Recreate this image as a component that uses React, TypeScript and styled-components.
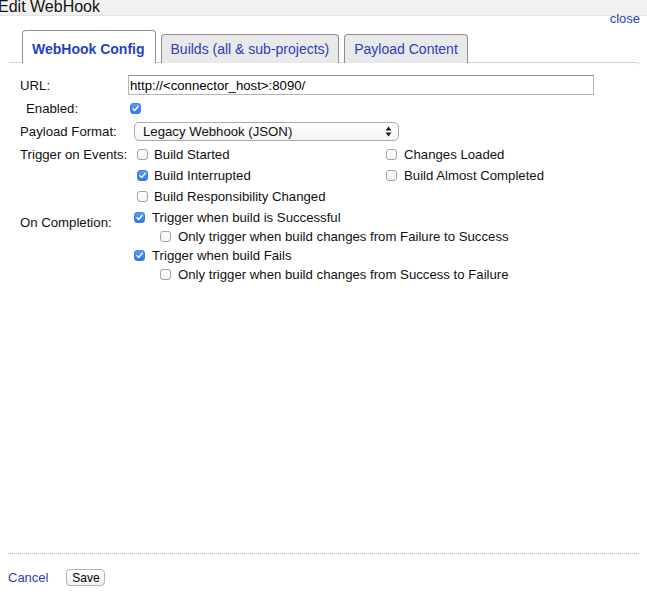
import React from "react";
import styled, {createGlobalStyle} from "styled-components";

const GlobalStyle = createGlobalStyle`
  html, body {
    margin: 0;
    padding: 0;
    background: #ffffff;
  }
  body {
    font-family: "Liberation Sans", Arial, Helvetica, sans-serif;
    font-size: 13.2px;
    color: #111;
  }
`;

const Dialog = styled.div`
  position: relative;
  width: 647px;
  height: 611px;
  display: flex;
  flex-direction: column;
  overflow: hidden;
`;

const TitleBar = styled.div`
  height: 15px;
  background: #f1f1f1;
  border-bottom: 1px solid #e2e2e2;
  overflow: hidden;
`;

const Title = styled.div`
  margin-left: -2px;
  font-size: 16px;
  line-height: 13px;
  color: #111;
  white-space: nowrap;
`;

const CloseLink = styled.a`
  position: absolute;
  top: 12px;
  right: 7px;
  font-size: 13px;
  line-height: 13px;
  color: #2a3fbd;
  text-decoration: none;
  cursor: pointer;
`;

const TabList = styled.div`
  display: flex;
  align-items: flex-end;
  gap: 5px;
  height: 32px;
  margin-top: 14px;
  padding-left: 22px;
  position: relative;
  z-index: 1;
`;

const Tab = styled.div<{ $active?: boolean }>`
  box-sizing: border-box;
  height: ${p => (p.$active ? 33 : 29)}px;
  margin-bottom: -1px;
  padding: ${p => (p.$active ? "0 10px 0 9px" : "0 9px")};
  display: flex;
  align-items: center;
  padding-top: ${p => (p.$active ? 4 : 0)}px;
  border: 1px solid #8f8f8f;
  border-bottom: none;
  border-radius: 4px 4px 0 0;
  background: ${p => (p.$active ? "#ffffff" : "#e9e9e9")};
  color: #2a3fbd;
  font-size: 14px;
  font-weight: ${p => (p.$active ? "bold" : "normal")};
  white-space: nowrap;
  cursor: pointer;
`;

const Panel = styled.div`
  flex: 1;
  margin: 0 7px 0 9px;
  border-top: 1px solid #d2d2d2;
  border-top-right-radius: 4px;
  padding: 10px 0 0 11px;
`;

const Row = styled.div<{ $height?: number; $top?: number }>`
  display: flex;
  align-items: ${p => (p.$height ? "center" : "flex-start")};
  height: ${p => (p.$height ? `${p.$height}px` : "auto")};
  margin-top: ${p => p.$top ?? 0}px;
`;

const Label = styled.div<{ $indent?: number; $top?: number }>`
  width: ${p => 108 - (p.$indent ?? 0)}px;
  flex-shrink: 0;
  margin-left: ${p => p.$indent ?? 0}px;
  padding-top: ${p => p.$top ?? 0}px;
  line-height: 21px;
  white-space: nowrap;
`;

const UrlInput = styled.input`
  box-sizing: border-box;
  width: 466px;
  height: 20px;
  margin: 0;
  padding: 0 1px;
  border: 1px solid #b4b4b4;
  border-top-color: #8e8e8e;
  font-family: inherit;
  font-size: 13.2px;
  color: #000;
  outline: none;
`;

const Select = styled.div`
  box-sizing: border-box;
  width: 265px;
  height: 19px;
  margin-left: 6px;
  padding: 0 6px 0 8px;
  display: flex;
  align-items: center;
  justify-content: space-between;
  border: 1px solid #a9a9a9;
  border-radius: 5px;
  background: linear-gradient(#ffffff, #f3f3f3);
  color: #111;
`;

const BoxWrap = styled.span<{ $checked?: boolean }>`
  box-sizing: border-box;
  width: 11px;
  height: 11px;
  flex-shrink: 0;
  display: inline-flex;
  align-items: center;
  justify-content: center;
  border-radius: 3px;
  border: 1px solid ${p => (p.$checked ? "#3a7ff0" : "#a3a3a3")};
  background: ${p => (p.$checked ? "linear-gradient(#5a9cfa, #2f74ec)" : "linear-gradient(#ffffff, #f4f4f4)")};
`;

const Check = ({checked}: { checked?: boolean }) => (
    <BoxWrap $checked={checked}>
        {checked &&
        <svg width="9" height="9" viewBox="0 0 9 9">
            <path d="M2 4.8 L3.7 6.4 L7 2.4" fill="none" stroke="#ffffff" strokeWidth="1.5" strokeLinecap="round" strokeLinejoin="round"/>
        </svg>}
    </BoxWrap>
);

const CheckSlot = styled.span`
  display: inline-flex;
  margin-left: 2px;
`;

const Option = styled.label<{ $indent?: number; $gap?: number; $height?: number }>`
  display: flex;
  align-items: center;
  gap: ${p => p.$gap ?? 7}px;
  height: ${p => p.$height ?? 19}px;
  margin-left: ${p => p.$indent ?? 0}px;
  white-space: nowrap;
`;

const EventGrid = styled.div`
  display: grid;
  grid-template-columns: 249px auto;
  margin-left: 9px;
`;

const Column = styled.div`
  display: flex;
  flex-direction: column;
`;

const Footer = styled.div`
  margin: 0 8px 0 8px;
  border-top: 1px dotted #b0b0b0;
  padding: 15px 0 25px;
  display: flex;
  align-items: center;
  gap: 18px;
`;

const CancelLink = styled.a`
  color: #2a3fbd;
  font-size: 13px;
  text-decoration: none;
  cursor: pointer;
`;

const SaveButton = styled.button`
  box-sizing: border-box;
  width: 39px;
  height: 17px;
  margin: 0;
  padding: 0;
  border: 1px solid #b5b5b5;
  border-radius: 4px;
  background: linear-gradient(#ffffff, #f2f2f2);
  font-family: inherit;
  font-size: 12px;
  color: #000;
`;

const Arrows = () => (
    <svg width="7" height="11" viewBox="0 0 7 11">
        <path d="M3.5 0.5 L6.5 4.5 L0.5 4.5 Z" fill="#222"/>
        <path d="M3.5 10.5 L6.5 6.5 L0.5 6.5 Z" fill="#222"/>
    </svg>
);

const App = () => {
    return (
        <>
            <GlobalStyle/>
            <Dialog>
                <TitleBar>
                    <Title>Edit WebHook</Title>
                </TitleBar>
                <CloseLink>close</CloseLink>
                <TabList>
                    <Tab $active>WebHook Config</Tab>
                    <Tab>Builds (all &amp; sub-projects)</Tab>
                    <Tab>Payload Content</Tab>
                </TabList>
                <Panel>
                    <Row $height={24}>
                        <Label>URL:</Label>
                        <UrlInput defaultValue="http://<connector_host>:8090/"/>
                    </Row>
                    <Row $height={23}>
                        <Label $indent={6}>Enabled:</Label>
                        <CheckSlot><Check checked/></CheckSlot>
                    </Row>
                    <Row $height={22}>
                        <Label>Payload Format:</Label>
                        <Select>
                            <span>Legacy Webhook (JSON)</span>
                            <Arrows/>
                        </Select>
                    </Row>
                    <Row $top={2}>
                        <Label>Trigger on Events:</Label>
                        <EventGrid>
                            <Column>
                                <Option $gap={6} $height={21}><Check/>Build Started</Option>
                                <Option $gap={6} $height={21}><Check checked/>Build Interrupted</Option>
                                <Option $gap={6} $height={21}><Check/>Build Responsibility Changed</Option>
                            </Column>
                            <Column>
                                <Option $gap={7} $height={21}><Check/>Changes Loaded</Option>
                                <Option $gap={7} $height={21}><Check/>Build Almost Completed</Option>
                            </Column>
                        </EventGrid>
                    </Row>
                    <Row $top={1}>
                        <Label $top={4}>On Completion:</Label>
                        <Column>
                            <Option $indent={6}><Check checked/>Trigger when build is Successful</Option>
                            <Option $indent={32}><Check/>Only trigger when build changes from Failure to Success</Option>
                            <Option $indent={6}><Check checked/>Trigger when build Fails</Option>
                            <Option $indent={32}><Check/>Only trigger when build changes from Success to Failure</Option>
                        </Column>
                    </Row>
                </Panel>
                <Footer>
                    <CancelLink>Cancel</CancelLink>
                    <SaveButton>Save</SaveButton>
                </Footer>
            </Dialog>
        </>
    );
};

export default App;
